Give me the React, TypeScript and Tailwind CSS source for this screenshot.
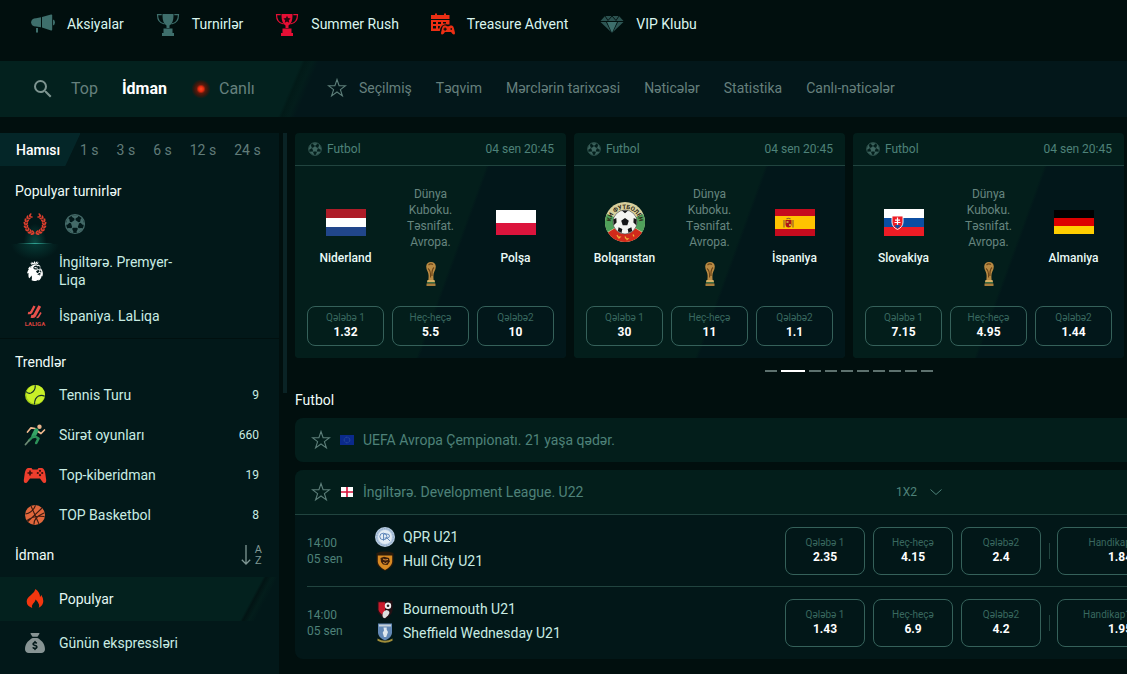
import { useState } from 'react';
import type { ReactNode } from 'react';
import { MdSearch } from 'react-icons/md';
import { SiPremierleague } from 'react-icons/si';
import { FaSackDollar } from 'react-icons/fa6';

type Odd = { label: string; value: string };

/* ---------- icons ---------- */

const Megaphone = () => (
  <svg viewBox="0 0 24 24" className="size-6 fill-[#3e6f6c]">
    <path d="M10 5.2v10L5 14.6a5 5 0 0 1-5-4.3A5 5 0 0 1 5 6.2z" />
    <path d="M11 5 20 2.5q1.2-.3 1.2 1v14q0 1.300-1.200.9L11 15.400z" />
    <path d="M22 7.500q2 .6 2 3t-2 3zM5 16h2v4q0 .8-1 .8t-1-.8z" />
  </svg>
);

const Cup = ({ red }: { red?: boolean }) => (
  <svg viewBox="0 0 24 24" className={red ? 'size-6 fill-[#e60f35]' : 'size-6 fill-[#3e6f6c]'}>
    <path d="M6.500 2h11v1.800q0 7.500-4 9.700V16h-3v-2.500q-4-2.200-4-9.700z" />
    <path
      d="M5.700 2.700H1.500q0 8 7 9.300M18.300 2.700h4.200q0 8-7 9.300"
      fill="none"
      stroke={red ? '#e60f35' : '#3e6f6c'}
      strokeWidth="1.200"
    />
    <path d="M7.500 16.500h9v4.500h1.500v3H6v-3h1.500z" />
    {red && <path d="m12 3.800 1.100 2.300 2.500.3-1.800 1.800.4 2.500L12 9.500l-2.200 1.200.4-2.500-1.800-1.800 2.500-.3z" fill="#2a0710" />}
  </svg>
);

const Advent = () => (
  <svg viewBox="0 0 24 24" className="size-6 fill-[#ec2f14]">
    <path d="M4 1.500h2V3h7V1.500h2V3h3.500v4H0V3h4z" />
    <path
      fillRule="evenodd"
      d="M0 8h18.500v4.500q-2 .3-3-.3l-2 .2q-3 .6-4 3.600L8.800 19H0zm2 2v2h3v-2zm5 0v2h3v-2zm5 0v1.500h3V10zM2 14v2.500h3V14zm5 0v2.500h1.500L9 14z"
    />
    <path
      fillRule="evenodd"
      d="M13 13.500h2l1 .8h2l1-.8h2q1.500.4 2 3l1 4.500q0 1.600-1.200 1.600-1 0-2.800-2.600h-6q-1.800 2.600-2.800 2.600-1.200 0-1.200-1.600l1-4.500q.5-2.600 2-3zm.5 2v1h-1v1.200h1v1h1.200v-1h1v-1.200h-1v-1zm6 .7v1.500H21v-1.500z"
    />
  </svg>
);

const Diamond = () => (
  <svg viewBox="0 0 24 24" className="size-6 fill-[#3e6f6c]">
    <path d="M5 4h14l4.500 5H.5z" opacity=".7" />
    <path d="M.5 10H6l5 10z" opacity=".75" />
    <path d="M7 10h10l-5 11z" />
    <path d="M18 10h5.500L13 20z" opacity=".75" />
    <path d="m5 4 3 4.500L12 4l4 4.500L19 4" fill="none" stroke="#01100f" strokeWidth=".9" />
    <path d="M.5 9.500h23" stroke="#01100f" strokeWidth=".8" />
  </svg>
);

const Star = () => (
  <svg viewBox="0 0 20 20" className="size-5 fill-none stroke-[#5d7f7a]" strokeWidth="1.100" strokeLinejoin="miter">
    <path d="m10 1.500 2.100 6.200h6.500l-5.200 3.900 2 6.300-5.400-3.900-5.400 3.900 2-6.300-5.200-3.900h6.500z" />
  </svg>
);

const Ball = ({ className }: { className: string }) => (
  <svg viewBox="0 0 24 24" className={className}>
    <circle cx="12" cy="12" r="9.500" fill="none" stroke="currentColor" strokeWidth="1.200" />
    <path d="m12 7.800 4.200 3-1.600 5H9.400l-1.600-5z" fill="currentColor" />
    {[0, 72, 144, 216, 288].map(a => (
      <g key={a} transform={`rotate(${a} 12 12)`}>
        <path d="M8.300 3.200h7.400L15 5l-3 1.700L9 5z" fill="currentColor" />
        <path d="M12 15.500v3" stroke="currentColor" transform="rotate(36 12 12)" />
      </g>
    ))}
  </svg>
);

const LEAVES = [-62, -42, -22, -2, 18, 38, 58, 76];

const Wreath = () => (
  <svg viewBox="0 0 24 24" className="size-6">
    {[1, -1].map(side => (
      <g key={side} transform={`translate(12 12) scale(${side} 1)`}>
        <path d="M4.500-8A9.200 9.200 0 0 1 .5 9.200" fill="none" stroke="#b8372b" strokeWidth=".6" />
        {LEAVES.map(a => (
          <g key={a} transform={`rotate(${a})`} fill="#df3f2e">
            <ellipse cx="10.300" cy="0" rx=".9" ry="2" transform="rotate(28 10.300 0)" />
            <ellipse cx="8" cy="0" rx=".8" ry="1.700" transform="rotate(-32 8 0)" />
          </g>
        ))}
      </g>
    ))}
  </svg>
);

const LaLiga = () => (
  <svg viewBox="0 0 24 24" className="size-6 fill-none stroke-[#e8514c]" strokeLinejoin="round">
    <path d="M11.500 2 8.300 8Q7.300 9.600 5 9" strokeWidth="2.400" />
    <path d="m16.800 2-5.200 9.500Q10.500 13 8 12.300" strokeWidth="3" />
    <path d="m18 8.500-2.400 4q-.6.900-2 .9" strokeWidth="1.500" />
    <text x="12" y="22" textAnchor="middle" fontSize="6" fontWeight="700" stroke="none" className="fill-[#d9433f]">
      LALIGA
    </text>
  </svg>
);

const TennisBall = () => (
  <svg viewBox="0 0 24 24" className="size-6">
    <circle cx="12" cy="12" r="10" fill="#a3cf1a" />
    <circle cx="12.600" cy="11.300" r="9.300" fill="#c8f028" />
    <path d="M3 8.500q2 2.500 5 1.500 4.500-2 4.300-7.700" fill="none" stroke="#17302c" strokeWidth="1.200" />
    <path d="M11.500 21.500q0-6.500 4-8.500 3.300-1.300 6.200.3" fill="none" stroke="#17302c" strokeWidth="1.200" />
  </svg>
);

const Runner = () => (
  <svg viewBox="0 0 24 24" className="size-6" fill="none" strokeLinecap="round" strokeLinejoin="round">
    <circle cx="16.500" cy="3.800" r="2.200" fill="#e8b48c" />
    <path d="M12 5.500 8 4.800 4.500 9M15 8.500l3 2L21.500 7" stroke="#f0b98f" strokeWidth="1.700" />
    <path d="m13.300 7.500-2.800 5.500" stroke="#35a566" strokeWidth="4.400" />
    <path d="m11.500 13 4 2.500-2.300 4.500" stroke="#2c9159" strokeWidth="2.600" />
    <path d="M9.500 14 6 17.500" stroke="#2c9159" strokeWidth="2.400" />
    <path d="m6 17.500-3.500 4" stroke="#6d8a74" strokeWidth="1.800" />
  </svg>
);

const Gamepad = () => (
  <svg viewBox="0 0 24 24" className="size-6">
    <path
      d="M5 5h3.500l1 1.500h5L15.500 5H19q2.300.4 3.200 5l1 7q.2 3-1.700 3-1.300 0-2.300-1.500L17 15.500H7L4.800 18.500Q3.800 20 2.500 20 .6 20 .8 17l1-7Q2.700 5.400 5 5z"
      fill="#ee3e2d"
    />
    <path d="M6.200 7.500h1.600v1.700h1.700v1.600H7.800v1.700H6.200v-1.700H4.500V9.200h1.700z" fill="#3b100c" />
    <g fill="#3b100c">
      <circle cx="17" cy="7.800" r="1.100" />
      <circle cx="17" cy="12.200" r="1.100" />
      <circle cx="14.800" cy="10" r="1.100" />
      <circle cx="19.200" cy="10" r="1.100" />
    </g>
  </svg>
);

const Basketball = () => (
  <svg viewBox="0 0 24 24" className="size-6">
    <circle cx="12" cy="12" r="10" fill="#e0673c" />
    <g fill="none" stroke="#3a1a10" strokeWidth="1.100">
      <path d="M4.500 18.800 19 5M8 3l8 18M2.500 11Q10 9.500 12.500 2.200M4 17.500q7-5.500 17.500-4M11 21.500q-.5-7 10-11.500" />
    </g>
  </svg>
);

const Flame = () => (
  <svg viewBox="0 0 24 24" className="size-6 fill-[#f3370f]">
    <path d="M12.500 2q4.500 3.500 4.500 8 1-.6 1.200-2.200Q20.300 11 20.300 14q0 4.500-4.600 6.700.8-1.500.3-3.200-.6-2.200-3.300-5-.8 2.600-2.700 4.200-1.800 1.800-.8 4.300-5.500-2-5.500-6.500 0-3.500 4-6.300Q11.600 5.600 12.500 2z" />
  </svg>
);

const SortAz = () => (
  <span className="flex items-center gap-1 text-[#7f9794]">
    <svg viewBox="0 0 10 22" className="h-[22px] w-2.5 fill-none stroke-current" strokeWidth="1.300">
      <path d="M5 1v19M.8 15.800 5 20l4.200-4.200" />
    </svg>
    <span className="flex flex-col text-[11px] leading-[11px]">
      <span>A</span>
      <span>Z</span>
    </span>
  </span>
);

const WorldCup = () => (
  <svg viewBox="0 0 12 24" className="h-6 w-3">
    <path d="M6 0Q10.500.2 10.800 4.500q0 3-1.600 5.500Q8 12.500 8.600 18H3.400Q4 12.500 2.800 10 1.200 7.500 1.200 4.500 1.500.2 6 0z" fill="#b98a43" />
    <path d="M3.500 3q2-2 4.500-.5M3 6.500q3 2 2.600 9M9 5.500Q6.500 8 7 14" fill="none" stroke="#6d4517" strokeWidth="1.100" />
    <path d="M2.500 18h7l.5 2H2z" fill="#d6b064" />
    <path d="M2 20h8v1.500H2z" fill="#3d6b3e" />
    <path d="M1.500 21.500h9V24h-9z" fill="#a87d3c" />
  </svg>
);

/* ---------- flags and crests ---------- */

const Niderland = () => (
  <svg viewBox="0 0 40 27" className="h-[27px] w-10">
    <path fill="#ae1c28" d="M0 0h40v9H0z" />
    <path fill="#fff" d="M0 9h40v9H0z" />
    <path fill="#21468b" d="M0 18h40v9H0z" />
  </svg>
);

const Polsa = () => (
  <svg viewBox="0 0 40 25" className="h-[25px] w-10">
    <path fill="#fff" d="M0 0h40v13H0z" />
    <path fill="#dc143c" d="M0 13h40v12H0z" />
  </svg>
);

const Bolqaristan = () => (
  <svg viewBox="0 0 40 40" className="size-10">
    <defs>
      <path id="bfs" d="M6 24a14.300 14.300 0 1 1 28 0" />
    </defs>
    <circle cx="20" cy="20" r="20" fill="#d7cf9c" />
    <path d="M2 12A20 20 0 0 0 2.500 30L20 20zM38 12a20 20 0 0 1-.5 18L20 20z" fill="#4fa05a" />
    <path d="M3 30.500a20 20 0 0 0 34 0L20 20z" fill="#d12a1b" />
    <text fontSize="6" fontWeight="700" fill="#2b2615" textAnchor="middle">
      <textPath href="#bfs" startOffset="50%">КИ ФУТБОЛЕН</textPath>
    </text>
    <path d="m12 33 1 2h2l-1.500 1.500M20 34.500l1 2 2 .2-1.500 1.300M28 32.500l1 2" fill="none" stroke="#f1b338" strokeWidth="1.200" />
    <circle cx="20" cy="20" r="12" fill="#f4f4f0" stroke="#444" strokeWidth=".6" />
    <g fill="#171717">
      <path d="m20 16 3.800 2.800-1.500 4.500h-4.600l-1.500-4.500zM16.800 8.600h6.400L20 11.200zM8.300 17.500l3-1.500.3 4.500-2.900 2.700zM31.700 17.500l-3-1.500-.3 4.500 2.900 2.700zM12.800 29l.8-3.700 3.700 1.800-.8 4zM27.200 29l-.8-3.700-3.700 1.800.8 4z" />
    </g>
  </svg>
);

const Ispaniya = () => (
  <svg viewBox="0 0 40 27" className="h-[27px] w-10">
    <path fill="#c60b1e" d="M0 0h40v27H0z" />
    <path fill="#ffc400" d="M0 7h40v13H0z" />
    <path fill="#ad1519" d="M10.500 11h6v5q-.5 2.500-3 2.500t-3-2.500z" />
    <path fill="#c7a23a" d="M11.500 12h2v2h-2zM14 15h2v2h-2z" />
    <path d="M9 11v7.500M18 11v7.500M11.500 10q2-1.500 4 0" fill="none" stroke="#93602d" strokeWidth="1.200" />
  </svg>
);

const Slovakiya = () => (
  <svg viewBox="0 0 40 27" className="h-[27px] w-10">
    <path fill="#fff" d="M0 0h40v9H0z" />
    <path fill="#0b4ea2" d="M0 9h40v9H0z" />
    <path fill="#ee1c25" d="M0 18h40v9H0z" />
    <path fill="#ee1c25" stroke="#fff" strokeWidth=".9" d="M8 7h11v6q0 5-5.500 7.500Q8 18 8 13z" />
    <path d="M13.500 8.500v8M11 11.200h5M10.500 13.500h6" stroke="#fff" strokeWidth="1.200" />
    <path d="M10.500 17q3-2.500 6 0l-3 2.500z" fill="#0b4ea2" />
  </svg>
);

const Almaniya = () => (
  <svg viewBox="0 0 40 24" className="h-6 w-10">
    <path d="M0 0h40v8H0z" />
    <path fill="#d00" d="M0 8h40v8H0z" />
    <path fill="#ffce00" d="M0 16h40v8H0z" />
  </svg>
);

const EuFlag = () => (
  <svg viewBox="0 0 14 10" className="h-2.5 w-3.5">
    <path fill="#0b2a8c" d="M0 0h14v10H0z" />
    <circle cx="7" cy="5" r="2.800" fill="none" stroke="#3f66a0" strokeWidth=".8" strokeDasharray=".8 .7" />
  </svg>
);

const EnglandFlag = () => (
  <svg viewBox="0 0 14 10" className="h-2.5 w-3.5">
    <path fill="#fff" d="M1 0h12v10H1z" />
    <path d="M7 0v10M1 5h12" stroke="#d8123a" strokeWidth="1.600" />
  </svg>
);

const Qpr = () => (
  <svg viewBox="0 0 20 20" className="size-5">
    <circle cx="10" cy="10" r="10" fill="#b7cbe0" />
    <circle cx="10" cy="10" r="8.300" fill="none" stroke="#7f9fc4" strokeDasharray="1 .8" />
    <circle cx="10" cy="10" r="6.900" fill="#e3edf5" />
    <g fill="none" stroke="#4673ad" strokeWidth=".8">
      <ellipse cx="8.300" cy="9.500" rx="3.500" ry="3.300" />
      <path d="M8.500 13.500V7H12q2.500 0 2.500 2t-2.500 2H9.500m2.500 0 3 3" />
    </g>
  </svg>
);

const Hull = () => (
  <svg viewBox="0 0 20 20" className="size-5">
    <path d="M1.500 2Q10-.8 18.500 2v9q-.5 5.500-8.500 9-8-3.500-8.500-9z" fill="#2b1b0c" />
    <path d="M2.800 4.500h14.400V11q-.5 4.500-7.200 8Q3.300 15.500 2.800 11z" fill="#d88a23" />
    <path d="M5.500 7 9 5.800l5 1.200.8 3.500-2.300 3.500L8 13.500l-2-2.500z" fill="#3a1d0b" />
    <path d="m8 8 2 1 3-.5M8 11.500l2.500 1 2-1.200" stroke="#e0913a" strokeWidth="1" fill="none" />
  </svg>
);

const Bournemouth = () => (
  <svg viewBox="0 0 20 20" className="size-5">
    <path d="M2.500 1.500 10 2.200l7.500-.7v10Q17 16 10 20 3 16 2.500 11.500z" fill="#241014" />
    <path d="M3.500 3.200H10V12l-3.200 3.500Q4 13.500 3.500 11z" fill="#c91a2c" />
    <path d="M8 18.500q-2-6 3.500-7.500Q16.500 12 13 16.500l-3 2.800z" fill="#ddd" />
    <circle cx="13" cy="6.800" r="3.200" fill="#f2f2f2" />
    <circle cx="13" cy="6.800" r="1.300" fill="#222" />
  </svg>
);

const Sheffield = () => (
  <svg viewBox="0 0 20 20" className="size-5">
    <path d="M3 .5h14V10q-.5 5-7 7.500Q3.500 15 3 10z" fill="#6288b5" />
    <path d="M4 1.500h12v2H4z" fill="#c5d0d8" />
    <path d="M8.500 4.500h3.200v2.300l1.300 2.200-1.800 5H9l-1.300-4.300L9 7.500z" fill="#dfe8ee" />
    <path d="M2.500 15.500Q10 20 17.500 15.500v2.200q-7.500 4.300-15 0z" fill="#a08e3a" />
  </svg>
);

/* ---------- data ---------- */

const promos = [
  { label: 'Aksiyalar', icon: <Megaphone /> },
  { label: 'Turnirlər', icon: <Cup /> },
  { label: 'Summer Rush', icon: <Cup red /> },
  { label: 'Treasure Advent', icon: <Advent /> },
  { label: 'VIP Klubu', icon: <Diamond /> },
];

const sections = ['Təqvim', 'Mərclərin tarixcəsi', 'Nəticələr', 'Statistika', 'Canlı-nəticələr'];
const hours = ['1 s', '3 s', '6 s', '12 s', '24 s'];

const trends = [
  { label: 'Tennis Turu', count: 9, icon: <TennisBall /> },
  { label: 'Sürət oyunları', count: 660, icon: <Runner /> },
  { label: 'Top-kiberidman', count: 19, icon: <Gamepad /> },
  { label: 'TOP Basketbol', count: 8, icon: <Basketball /> },
];

const odds = (a: string, x: string, b: string): Odd[] => [
  { label: 'Qələbə 1', value: a },
  { label: 'Heç-heçə', value: x },
  { label: 'Qələbə2', value: b },
];

const cards = [
  { home: 'Niderland', away: 'Polşa', homeFlag: <Niderland />, awayFlag: <Polsa />, odds: odds('1.32', '5.5', '10') },
  { home: 'Bolqarıstan', away: 'İspaniya', homeFlag: <Bolqaristan />, awayFlag: <Ispaniya />, odds: odds('30', '11', '1.1') },
  { home: 'Slovakiya', away: 'Almaniya', homeFlag: <Slovakiya />, awayFlag: <Almaniya />, odds: odds('7.15', '4.95', '1.44') },
];

const games = [
  {
    home: 'QPR U21',
    away: 'Hull City U21',
    homeLogo: <Qpr />,
    awayLogo: <Hull />,
    odds: odds('2.35', '4.15', '2.4'),
    handicap: { label: 'Handikap1 (0)', value: '1.84' },
  },
  {
    home: 'Bournemouth U21',
    away: 'Sheffield Wednesday U21',
    homeLogo: <Bournemouth />,
    awayLogo: <Sheffield />,
    odds: odds('1.43', '6.9', '4.2'),
    handicap: { label: 'Handikap1 (-1.5)', value: '1.95' },
  },
];

/* ---------- parts ---------- */

function OddButton({ odd, className }: { odd: Odd; className: string }) {
  return (
    <button
      type="button"
      className={`flex flex-col items-center justify-center rounded-lg border border-[#35615a] hover:bg-[#0a2f2b] ${className}`}
    >
      <span className="text-[10px] leading-3 text-[#39685f]">{odd.label}</span>
      <span className="text-xs leading-4 font-bold text-white">{odd.value}</span>
    </button>
  );
}

function Team({ name, flag }: { name: string; flag: ReactNode }) {
  return (
    <div className="flex flex-col items-center gap-2 pt-4">
      <div className="flex h-10 items-center">{flag}</div>
      <span className="text-xs leading-4 font-medium text-[#eafaf6]">{name}</span>
    </div>
  );
}

function MatchCard({ card }: { card: (typeof cards)[number] }) {
  return (
    <article className="overflow-hidden rounded bg-[#031e1b]">
      <header className="flex h-[33px] items-center justify-between border-b border-[#21443f] px-3 text-xs text-[#4e8279]">
        <span className="flex items-center gap-1">
          <Ball className="size-4 text-[#3d645e]" />
          Futbol
        </span>
        <time>04 sen 20:45</time>
      </header>
      <div className="bg-[linear-gradient(110deg,#031e1b_56%,#02171a_57%)] px-3 pt-5 pb-3">
        <div className="grid grid-cols-3 gap-2">
          <Team name={card.home} flag={card.homeFlag} />
          <div className="flex flex-col items-center gap-3">
            <p className="w-14 text-center text-xs leading-4 text-[#66857f]">Dünya Kuboku. Təsnifat. Avropa.</p>
            <WorldCup />
          </div>
          <Team name={card.away} flag={card.awayFlag} />
        </div>
        <div className="mt-5 grid grid-cols-3 gap-2">
          {card.odds.map(o => (
            <OddButton key={o.label} odd={o} className="h-10" />
          ))}
        </div>
      </div>
    </article>
  );
}

function GameRow({ game }: { game: (typeof games)[number] }) {
  return (
    <li className="ml-3 flex h-18 items-center border-[#21443f] not-last:border-b">
      <time className="w-17 text-xs leading-4 text-[#4e8279]">
        14:00
        <br />
        05 sen
      </time>
      <div className="w-[410px] pb-1 text-sm leading-6 text-[#c9ece3]">
        <div className="flex items-center gap-2">
          {game.homeLogo}
          {game.home}
        </div>
        <div className="flex items-center gap-2">
          {game.awayLogo}
          {game.away}
        </div>
      </div>
      <div className="flex items-center gap-2">
        {game.odds.map(o => (
          <OddButton key={o.label} odd={o} className="h-12 w-20" />
        ))}
      </div>
      <span className="mr-[7px] ml-2 h-4 w-px bg-[#21443f]" />
      <OddButton odd={game.handicap} className="h-12 w-[126px]" />
    </li>
  );
}

function Sidebar() {
  const [period, setPeriod] = useState('Hamısı');

  return (
    <aside className="w-[279px] shrink-0 bg-[#021819] text-sm text-[#c9ece3]">
      <div className="flex h-[33px] items-center text-[#617c79]">
        <button
          type="button"
          onClick={() => setPeriod('Hamısı')}
          className="h-full w-20 bg-[linear-gradient(115deg,#042628_84%,transparent_85%)] pl-4 text-left font-medium text-white"
        >
          Hamısı
        </button>
        <div className="flex gap-[18px]">
          {hours.map(h => (
            <button key={h} type="button" onClick={() => setPeriod(h)} className={period === h ? 'text-white' : ''}>
              {h}
            </button>
          ))}
        </div>
      </div>

      <h2 className="flex h-[46px] items-center pt-1 pl-[15px] text-[#effcf8]">Populyar turnirlər</h2>
      <div className="flex h-8 gap-1 pl-[17px]">
        <button
          type="button"
          aria-label="Top turnirlər"
          className="flex w-9 flex-col items-center justify-between bg-[radial-gradient(ellipse_at_bottom,#0b4a43_0%,transparent_45%)]"
        >
          <Wreath />
          <span className="h-px w-9 bg-linear-to-r from-transparent via-[#2fa090] to-transparent" />
        </button>
        <button type="button" aria-label="Futbol turnirləri" className="flex w-9 justify-center">
          <Ball className="size-6 text-[#446a68]" />
        </button>
      </div>
      <ul className="bg-[radial-gradient(ellipse_24px_16px_at_35px_0,#063a35_0%,transparent_100%)]">
        <li>
          <a href="#" className="flex h-[54px] items-center gap-3 pl-[23px] leading-[18px]">
            <span className="flex size-6 shrink-0 items-center justify-center">
              <SiPremierleague className="size-5 text-white" />
            </span>
            <span className="w-32">İngiltərə. Premyer-Liqa</span>
          </a>
        </li>
        <li>
          <a href="#" className="flex h-9 items-center gap-3 pl-[23px] leading-[18px]">
            <LaLiga />
            İspaniya. LaLiqa
          </a>
        </li>
      </ul>

      <section className="mt-1 border-t border-[#01100f] pt-2">
        <h2 className="flex h-7 items-center pt-0.5 pl-[15px] text-[#effcf8]">Trendlər</h2>
        <ul>
          {trends.map(t => (
            <li key={t.label}>
              <a href="#" className="flex h-10 items-center gap-3 pr-5 pl-[23px]">
                {t.icon}
                <span className="flex-1">{t.label}</span>
                <span className="text-xs">{t.count}</span>
              </a>
            </li>
          ))}
        </ul>
      </section>

      <div className="flex h-[42px] items-center justify-between pr-[17px] pb-0.5 pl-[15px]">
        <h2 className="text-[#effcf8]">İdman</h2>
        <button type="button" aria-label="A-Z sırala">
          <SortAz />
        </button>
      </div>
      <ul>
        <li>
          <a
            href="#"
            className="flex h-11 items-center gap-3 bg-[linear-gradient(118deg,#03211e_87%,#021414_88%,#031d1b_90%,#021819_92%)] pl-[23px] text-[#e3f7f2]"
          >
            <Flame />
            Populyar
          </a>
        </li>
        <li>
          <a href="#" className="flex h-11 items-center gap-3 pl-[23px]">
            <span className="flex size-6 items-center justify-center">
              <FaSackDollar className="size-5 text-[#879494]" />
            </span>
            Günün ekspressləri
          </a>
        </li>
      </ul>
    </aside>
  );
}

export default function App() {
  const [slide, setSlide] = useState(1);
  const [market, setMarket] = useState('1X2');

  return (
    <div className="flex min-h-screen flex-col overflow-hidden bg-[#010f0e] font-['Roboto',sans-serif]">
      <nav className="flex h-[61px] items-center gap-8 pb-3.5 pl-[31px] text-sm whitespace-nowrap text-[#d9f5ee]">
        {promos.map(p => (
          <a key={p.label} href="#" className="flex items-center gap-3">
            {p.icon}
            {p.label}
          </a>
        ))}
      </nav>

      <div className="mb-4 flex h-14 items-center bg-[#03171a] whitespace-nowrap text-[#66807d]">
        <div className="flex h-full w-[327px] shrink-0 items-center bg-[linear-gradient(113deg,#03211e_86%,#021a18_87%,#031d1b_89%,#03171a_91%)] pl-[31px]">
          <button type="button" aria-label="Axtar" className="mr-4">
            <MdSearch className="size-6 text-[#7d9490]" />
          </button>
          <a href="#" className="mr-6">
            Top
          </a>
          <a href="#" className="mr-6 font-bold text-white">
            İdman
          </a>
          <a href="#" className="flex items-center gap-2">
            <span className="size-5 rounded-full bg-[radial-gradient(circle,#ff4a22_0%,#e42b10_18%,#5c1a0c_32%,#33180f_50%,transparent_68%)]" />
            Canlı
          </a>
        </div>
        <nav className="flex items-center gap-6 pb-0.5 text-sm">
          <a href="#" className="flex items-center gap-3">
            <Star />
            Seçilmiş
          </a>
          {sections.map(s => (
            <a key={s} href="#">
              {s}
            </a>
          ))}
        </nav>
      </div>

      <div className="flex flex-1">
        <Sidebar />
        <div className="mx-1 h-[260px] w-1 shrink-0 bg-[#0a2325]" />

        <main className="ml-1 min-w-[1108px] flex-1">
          <div className="grid grid-cols-4 gap-2">
            {cards.map(c => (
              <MatchCard key={c.home} card={c} />
            ))}
          </div>
          <div className="mt-3 flex justify-center gap-1">
            {Array.from({ length: 10 }, (_, i) => (
              <button
                key={i}
                type="button"
                aria-label={`Slayd ${i + 1}`}
                onClick={() => setSlide(i)}
                className={i === slide ? 'h-0.5 w-6 bg-white' : 'h-0.5 w-3 bg-[#5d716e]'}
              />
            ))}
          </div>

          <h2 className="mt-[18px] text-sm text-[#effcf8]">Futbol</h2>
          <section className="mt-2 flex h-11 items-center rounded-lg bg-[#031e1b] pl-4 text-sm text-[#4e8279]">
            <button type="button" aria-label="Seçilmişlərə əlavə et" className="mr-2">
              <Star />
            </button>
            <span className="mr-2 flex w-4 justify-center">
              <EuFlag />
            </span>
            <h3>UEFA Avropa Çempionatı. 21 yaşa qədər.</h3>
          </section>

          <section className="mt-2 rounded-lg bg-[#021718]">
            <header className="flex h-[45px] items-center rounded-t-lg border-b border-[#21443f] bg-[#031e1b] pl-4 text-sm text-[#4e8279]">
              <button type="button" aria-label="Seçilmişlərə əlavə et" className="mr-2">
                <Star />
              </button>
              <span className="mr-2 flex w-4 justify-center">
                <EnglandFlag />
              </span>
              <h3 className="w-[533px]">İngiltərə. Development League. U22</h3>
              <label className="relative flex items-center text-xs">
                <select
                  aria-label="Bazar"
                  value={market}
                  onChange={e => setMarket(e.target.value)}
                  className="w-12 appearance-none bg-transparent outline-none"
                >
                  <option>1X2</option>
                </select>
                <svg viewBox="0 0 16 16" className="pointer-events-none absolute right-0 size-4 fill-none stroke-current">
                  <path d="m2.500 5.500 5.500 5 5.500-5" />
                </svg>
              </label>
            </header>
            <ul>
              {games.map(g => (
                <GameRow key={g.home} game={g} />
              ))}
            </ul>
          </section>
        </main>
      </div>
    </div>
  );
}
